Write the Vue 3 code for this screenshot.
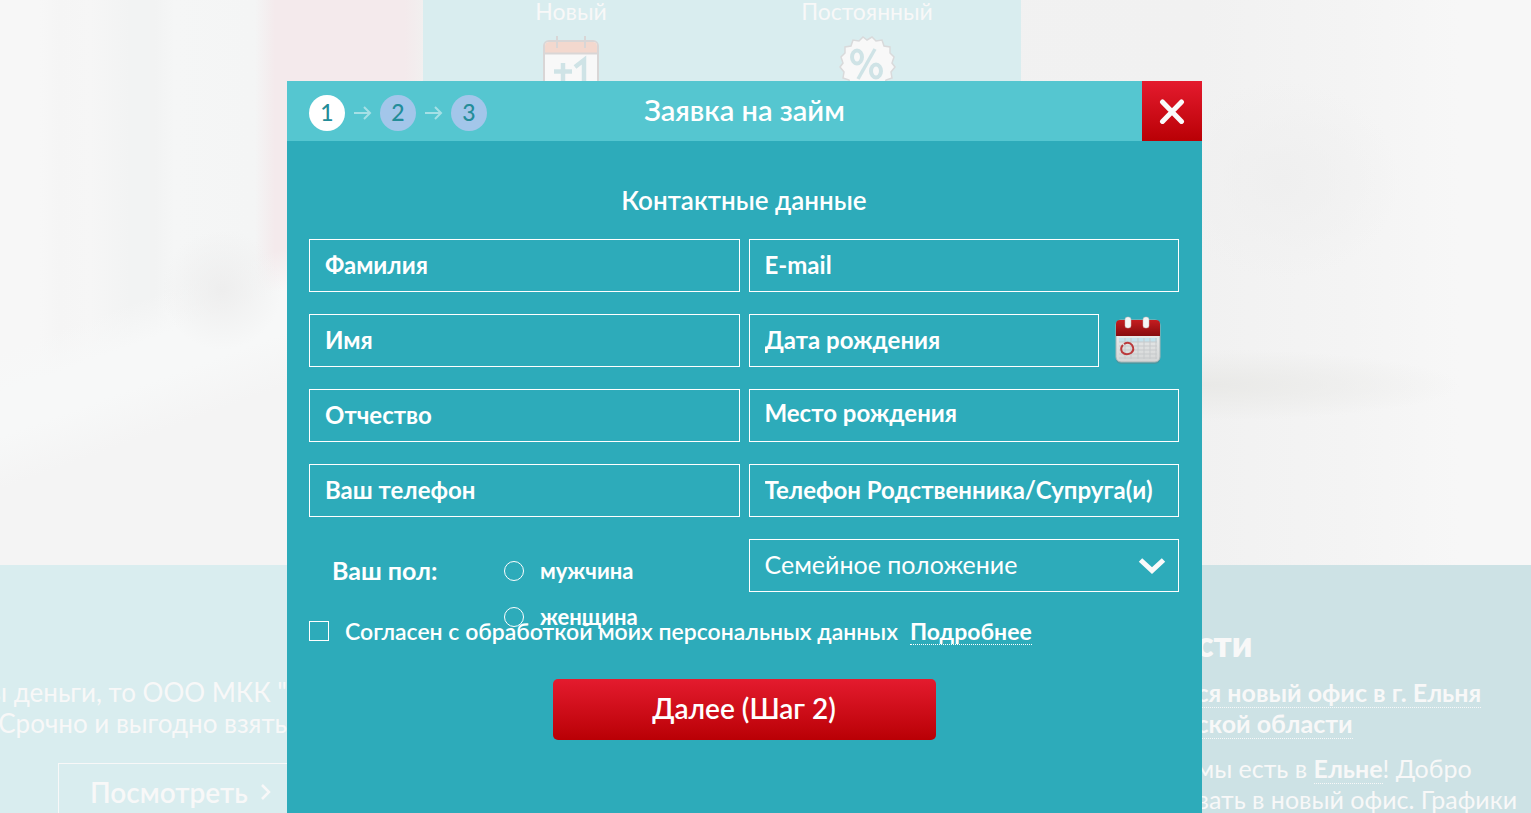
<script setup>
import { ref } from 'vue'

const steps = [1, 2, 3]
const gender = ref('')
const agreed = ref(false)
const status = ref('')
</script>

<template>
  <div class="page">
    <main class="site">
      <section class="hero">
        <div class="clients">
          <div class="client">
            <span>Новый</span>
            <svg width="58" height="58" viewBox="0 0 58 58" aria-hidden="true">
              <rect x="2" y="5" width="54" height="52" rx="5" fill="#f8f8f8" stroke="#d9d6d6" stroke-width="2" />
              <path d="M3 17V10q0-4 4-4h44q4 0 4 4v7z" fill="#f3d8ce" />
              <path d="M2 17.500h54M15 0v12M43 0v12" fill="none" stroke="#d9d6d6" stroke-width="2" />
              <path d="M12 35.500h18M21 27v18M33 31l9-7v34" fill="none" stroke="#cfe3e6" stroke-width="4.500" />
            </svg>
          </div>
          <div class="client">
            <span>Постоянный</span>
            <svg width="58" height="58" viewBox="0 0 58 58" aria-hidden="true">
              <path d="M29 4l5-3 4 4 6-1 2 6 6 1v6l4 4-2 6 3 4-4 5 1 6-6 2-2 6-6-1-5 5-6-3-6 3-4-5-6 1-2-6-6-2 1-6-4-5 3-4-2-6 4-4v-6l6-1 2-6 6 1 4-4z" fill="#f8f8f8" stroke="#d9dadb" stroke-width="1.500" />
              <g fill="none" stroke="#cfe3e6" stroke-width="4">
                <ellipse cx="19" cy="21" rx="5" ry="6.500" /><ellipse cx="38" cy="35" rx="5" ry="6.500" /><path d="M37 13L20 43" stroke-width="3.500" />
              </g>
            </svg>
          </div>
        </div>
      </section>
      <div class="lower">
        <section class="about">
          <div class="lead"><p>ны деньги, то ООО МКК "</p><p>Срочно и выгодно взять</p></div>
          <a class="more" href="#">Посмотреть
            <svg width="12" height="18" viewBox="0 0 12 18" aria-hidden="true"><path d="M2 2l7 7-7 7" fill="none" stroke="#f8f8f8" stroke-width="2.500" /></svg>
          </a>
        </section>
        <section class="news">
          <h2>сти</h2>
          <p class="headline"><a href="#">ся новый офис в г. Ельня</a><br /><a href="#">ской области</a></p>
          <p>мы есть в <a href="#">Ельне</a>! Добро<br />вать в новый офис. Графики</p>
        </section>
      </div>
    </main>

    <div class="overlay">
      <div class="modal" role="dialog" aria-labelledby="dialog-title">
        <header class="bar">
          <ol class="steps">
            <li v-for="s in steps" :key="s">
              <svg v-if="s > 1" width="18" height="14" viewBox="0 0 18 14" aria-hidden="true"><path d="M0 7h16M10 1l6 6-6 6" fill="none" stroke="#a5e0e6" stroke-width="2" /></svg>
              <span class="step" :class="{ active: s === 1 }">{{ s }}</span>
            </li>
          </ol>
          <h1 id="dialog-title">Заявка на займ</h1>
          <button class="close" type="button" aria-label="Закрыть">
            <svg width="26" height="26" viewBox="0 0 26 26" aria-hidden="true"><path d="M3.500 4l19 19.500M22.500 4L3.500 23.500" stroke="#fafafa" stroke-width="5" stroke-linecap="round" /></svg>
          </button>
        </header>
        <form @submit.prevent>
          <h2>Контактные данные</h2>
          <div class="fields">
            <input type="text" placeholder="Фамилия" aria-label="Фамилия" />
            <input type="email" placeholder="E-mail" aria-label="E-mail" />
            <input type="text" placeholder="Имя" aria-label="Имя" />
            <div class="date">
              <input type="text" placeholder="Дата рождения" aria-label="Дата рождения" />
              <button type="button" aria-label="Календарь">
                <svg width="48" height="50" viewBox="0 0 48 50" aria-hidden="true">
                  <defs>
                    <linearGradient id="cap" x1="0" y1="0" x2="0" y2="1"><stop stop-color="#c51d20" /><stop offset="1" stop-color="#870b0e" /></linearGradient>
                    <linearGradient id="sheet" x1="0" y1="0" x2="0" y2="1"><stop stop-color="#f2f4f4" /><stop offset="1" stop-color="#d4d6d6" /></linearGradient>
                  </defs>
                  <rect x="2" y="6" width="44" height="42" rx="5" fill="#548d94" opacity=".6" />
                  <rect x="2" y="4" width="44" height="42" rx="5" fill="url(#sheet)" stroke="#a9b5b6" />
                  <path d="M2 20V8q0-4 4-4h36q4 0 4 4v12z" fill="url(#cap)" />
                  <path d="M5 22h38v4H5z" fill="#c4e2ec" />
                  <path d="M5 26h38M5 30h38M5 34h38M5 38h38M5 42h38M11 22v21M17 22v21M24 22v21M30 22v21M36 22v21M42 22v21" stroke="#c6c9cb" fill="none" />
                  <rect x="11" y="1" width="6" height="11" rx="2.500" fill="#f5f5f5" stroke="#c7b5b5" stroke-width=".5" />
                  <rect x="29" y="1" width="6" height="11" rx="2.500" fill="#f5f5f5" stroke="#c7b5b5" stroke-width=".5" />
                  <path d="M10 28q5-3 8 1 3 5-1 8-5 3-9-1-2-4 1-7" fill="none" stroke="#bb393b" stroke-width="2" />
                </svg>
              </button>
            </div>
            <input type="text" placeholder="Отчество" aria-label="Отчество" />
            <textarea rows="1" placeholder="Место рождения" aria-label="Место рождения"></textarea>
            <input type="tel" placeholder="Ваш телефон" aria-label="Ваш телефон" />
            <input type="tel" placeholder="Телефон Родственника/Супруга(и)" aria-label="Телефон Родственника/Супруга(и)" />
            <div class="gender" role="radiogroup" aria-labelledby="gender-label">
              <span id="gender-label">Ваш пол:</span>
              <div class="options">
                <label><input v-model="gender" type="radio" name="gender" value="m" />мужчина</label>
                <label><input v-model="gender" type="radio" name="gender" value="f" />женщина</label>
              </div>
            </div>
            <div class="select">
              <select v-model="status" aria-label="Семейное положение">
                <option value="">Семейное положение</option>
              </select>
              <svg width="28" height="18" viewBox="0 0 28 18" aria-hidden="true"><path d="M2.500 3L14 13.500 25.500 3" fill="none" stroke="#fafafa" stroke-width="5" /></svg>
            </div>
          </div>
          <div class="consent">
            <label><input v-model="agreed" type="checkbox" />Согласен с обработкой моих персональных данных</label>
            <a href="#">Подробнее</a>
          </div>
          <button class="next" type="submit">Далее (Шаг 2)</button>
        </form>
      </div>
    </div>
  </div>
</template>

<style>
body { margin: 0; overflow: hidden; }
</style>

<style scoped>
* { box-sizing: border-box; }
.page { position: relative; height: 100vh; overflow: hidden; font-family: Lato, "Noto Sans", sans-serif; color: #fff; }
h1, h2, p, ol { margin: 0; padding: 0; font-weight: 600; }
button, input, select, textarea { font: inherit; color: inherit; }
button { border: 0; padding: 0; cursor: pointer; }
a { color: inherit; text-decoration: none; }
svg { display: block; flex: none; }

.site { color: #f8f8f8; font-size: 25px; line-height: 31px; }
.hero {
  height: 565px;
  padding: 0 510px 0 423px;
  background:
    radial-gradient(ellipse 260px 36px at 1200px 385px, #e9e9e7, transparent),
    radial-gradient(ellipse 120px 100px at 1280px 180px, #efefef, transparent),
    radial-gradient(ellipse 60px 60px at 222px 290px, #eeeeee, transparent),
    linear-gradient(160deg, transparent 330px, #f7f8f8 370px, #f7f8f8 410px, #f4f4f4 460px) 0 0 / 430px 100% no-repeat,
    linear-gradient(90deg, transparent 255px, #f4eaec 275px, #f4eaec 405px, #f2efef 422px, transparent 424px) 0 0 / 100% 290px no-repeat,
    linear-gradient(90deg, #f7f7f7 40px, #f5f5f5 60px, #f6f6f6 90px, #f2f3f3 130px, #f2f3f3 155px, #f5f6f6 175px, #f4f5f5 250px, #f2f2f2 400px, #f1f1f1 1200px, #f4f4f4 1350px, #f7f7f7 1460px);
}
.clients { display: grid; grid-template-columns: 1fr 1fr; height: 240px; padding-right: 6px; background: #d9edef; font-size: 23px; line-height: 22px; }
.client { display: flex; flex-direction: column; align-items: center; gap: 14px; }
.lower { display: grid; grid-template-columns: 1fr 1fr; height: 260px; }
.about { background: #d9edef; padding-top: 112px; }
.lead { width: 287px; display: flex; flex-direction: column; align-items: flex-end; white-space: nowrap; font-size: 26px; }
.lead p { font-weight: 400; }
.more { display: flex; align-items: center; gap: 12px; width: 320px; height: 58px; margin: 24px 0 0 58px; padding-left: 31px; border: 1px solid #f8f8f8; font-size: 28px; font-weight: 600; }
.news { background: #cde2e5; padding: 59px 0 0 431px; white-space: nowrap; }
.news h2 { font-size: 35px; font-weight: 800; line-height: 38px; margin-bottom: 15px; }
.news p { font-weight: 400; margin-bottom: 14px; }
.news a { font-weight: 700; border-bottom: 1px dotted #f8f8f8; }

.overlay { position: absolute; inset: 0; padding: 81px 42px 0 0; display: flex; justify-content: center; }
.modal { width: 100%; max-width: 915px; background: #2dabba; }
.bar { display: grid; grid-template-columns: 1fr auto 1fr; align-items: center; height: 60px; background: #55c6d0; }
.steps { display: flex; gap: 9px; padding: 4px 0 0 22px; list-style: none; }
.steps li { display: flex; align-items: center; gap: 8px; }
.step { width: 36px; height: 36px; border-radius: 50%; background: #a3c6ea; color: #238d99; font-size: 23px; line-height: 34px; text-align: center; font-weight: 500; }
.step.active { background: #fff; }
.bar h1 { font-size: 29px; line-height: 34px; padding-bottom: 2px; }
.close { justify-self: end; display: grid; place-items: center; width: 60px; height: 60px; background: linear-gradient(#e41b2e, #b90005); }
form { padding: 42px 23px 0 22px; font-weight: 600; font-size: 24px; }
form h2 { text-align: center; font-size: 26px; line-height: 34px; margin-bottom: 22px; }
.fields { display: grid; grid-template-columns: minmax(0, 1fr) minmax(0, 1fr); gap: 22px 9px; grid-auto-rows: 53px; }
.fields > input, .date input, textarea, select { width: 100%; height: 53px; padding: 0 15px 2px; border: 1px solid #fff; border-radius: 0; background: transparent; outline: 0; appearance: none; font-weight: 700; }
textarea { resize: none; padding: 8px 15px; line-height: 30px; overflow: hidden; }
::placeholder { color: #fff; opacity: 1; }
.date { display: grid; grid-template-columns: 1fr 80px; }
.date button { background: none; display: grid; place-items: center; padding-right: 2px; }
.gender { display: grid; grid-template-columns: 172px 1fr; padding: 17px 0 0 23px; font-weight: 700; line-height: 30px; font-size: 22px; }
.gender > span { font-size: 25px; line-height: 28px; }
.options { display: flex; flex-direction: column; gap: 16px; }
.options label, .consent label { display: flex; align-items: center; gap: 16px; }
.options input, .consent input { appearance: none; flex: none; width: 20px; height: 20px; margin: 0; border: 1px solid #fff; }
.options input { border-radius: 50%; }
.select { position: relative; }
.select select { font-weight: 400; font-size: 25px; padding-bottom: 4px; }
.select svg { position: absolute; right: 13px; top: 18px; pointer-events: none; }
.consent { display: flex; align-items: center; gap: 12px; margin-top: 24px; line-height: 30px; font-size: 23px; }
.consent a { border-bottom: 1px dotted #fff; line-height: 26px; font-weight: 700; }
.next { display: block; width: 383px; max-width: 100%; height: 61px; margin: 33px auto 0; padding-bottom: 4px; border-radius: 5px; background: linear-gradient(#e41b2e, #b90005); font-size: 28px; }
</style>
